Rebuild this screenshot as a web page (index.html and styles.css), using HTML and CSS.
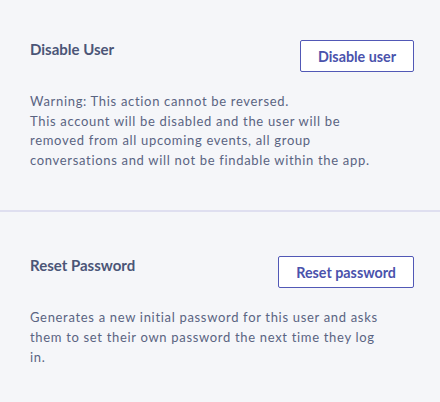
FILE: index.html
```html
<!DOCTYPE html>
<html lang="en">
<head>
<meta charset="utf-8">
<title>User settings</title>
<link rel="stylesheet" href="styles.css">
</head>
<body>
  <section class="setting setting--first">
    <div class="setting__head">
      <h3 class="setting__title">Disable User</h3>
      <button class="btn-outline" type="button">Disable user</button>
    </div>
    <p class="setting__desc">Warning: This action cannot be reversed.<br>This account will be disabled and the user will be removed from all upcoming events, all group conversations and will not be findable within the app.</p>
  </section>
  <section class="setting setting--second">
    <div class="setting__head">
      <h3 class="setting__title">Reset Password</h3>
      <button class="btn-outline" type="button">Reset password</button>
    </div>
    <p class="setting__desc">Generates a new initial password for this user and asks them to set their own password the next time they log in.</p>
  </section>
</body>
</html>
```

FILE: styles.css
```css
html, body {
  margin: 0;
  background: #f5f6f9;
}

body {
  font-family: Lato, "Noto Sans", sans-serif;
  color: #5a6482;
}

.setting {
  padding: 40px 26px 40px 30px;
}

.setting--first {
  border-bottom: 2px solid #dfdff0;
}

.setting--second {
  padding-top: 44px;
}

.setting__head {
  display: flex;
  justify-content: space-between;
  align-items: flex-start;
}

.setting__title {
  margin: 0;
  font-size: 15px;
  line-height: 19px;
  font-weight: 700;
  color: #4b5577;
}

.btn-outline {
  height: 32px;
  padding: 0 17px;
  border: 1px solid #5158b6;
  border-radius: 2px;
  background: #fff;
  color: #4a52ac;
  font-family: inherit;
  font-size: 14.3px;
  font-weight: 700;
  cursor: pointer;
}

.setting__desc {
  margin: 20px 0 0;
  max-width: 352px;
  font-size: 13px;
  line-height: 19.6px;
  letter-spacing: 0.68px;
}
```
